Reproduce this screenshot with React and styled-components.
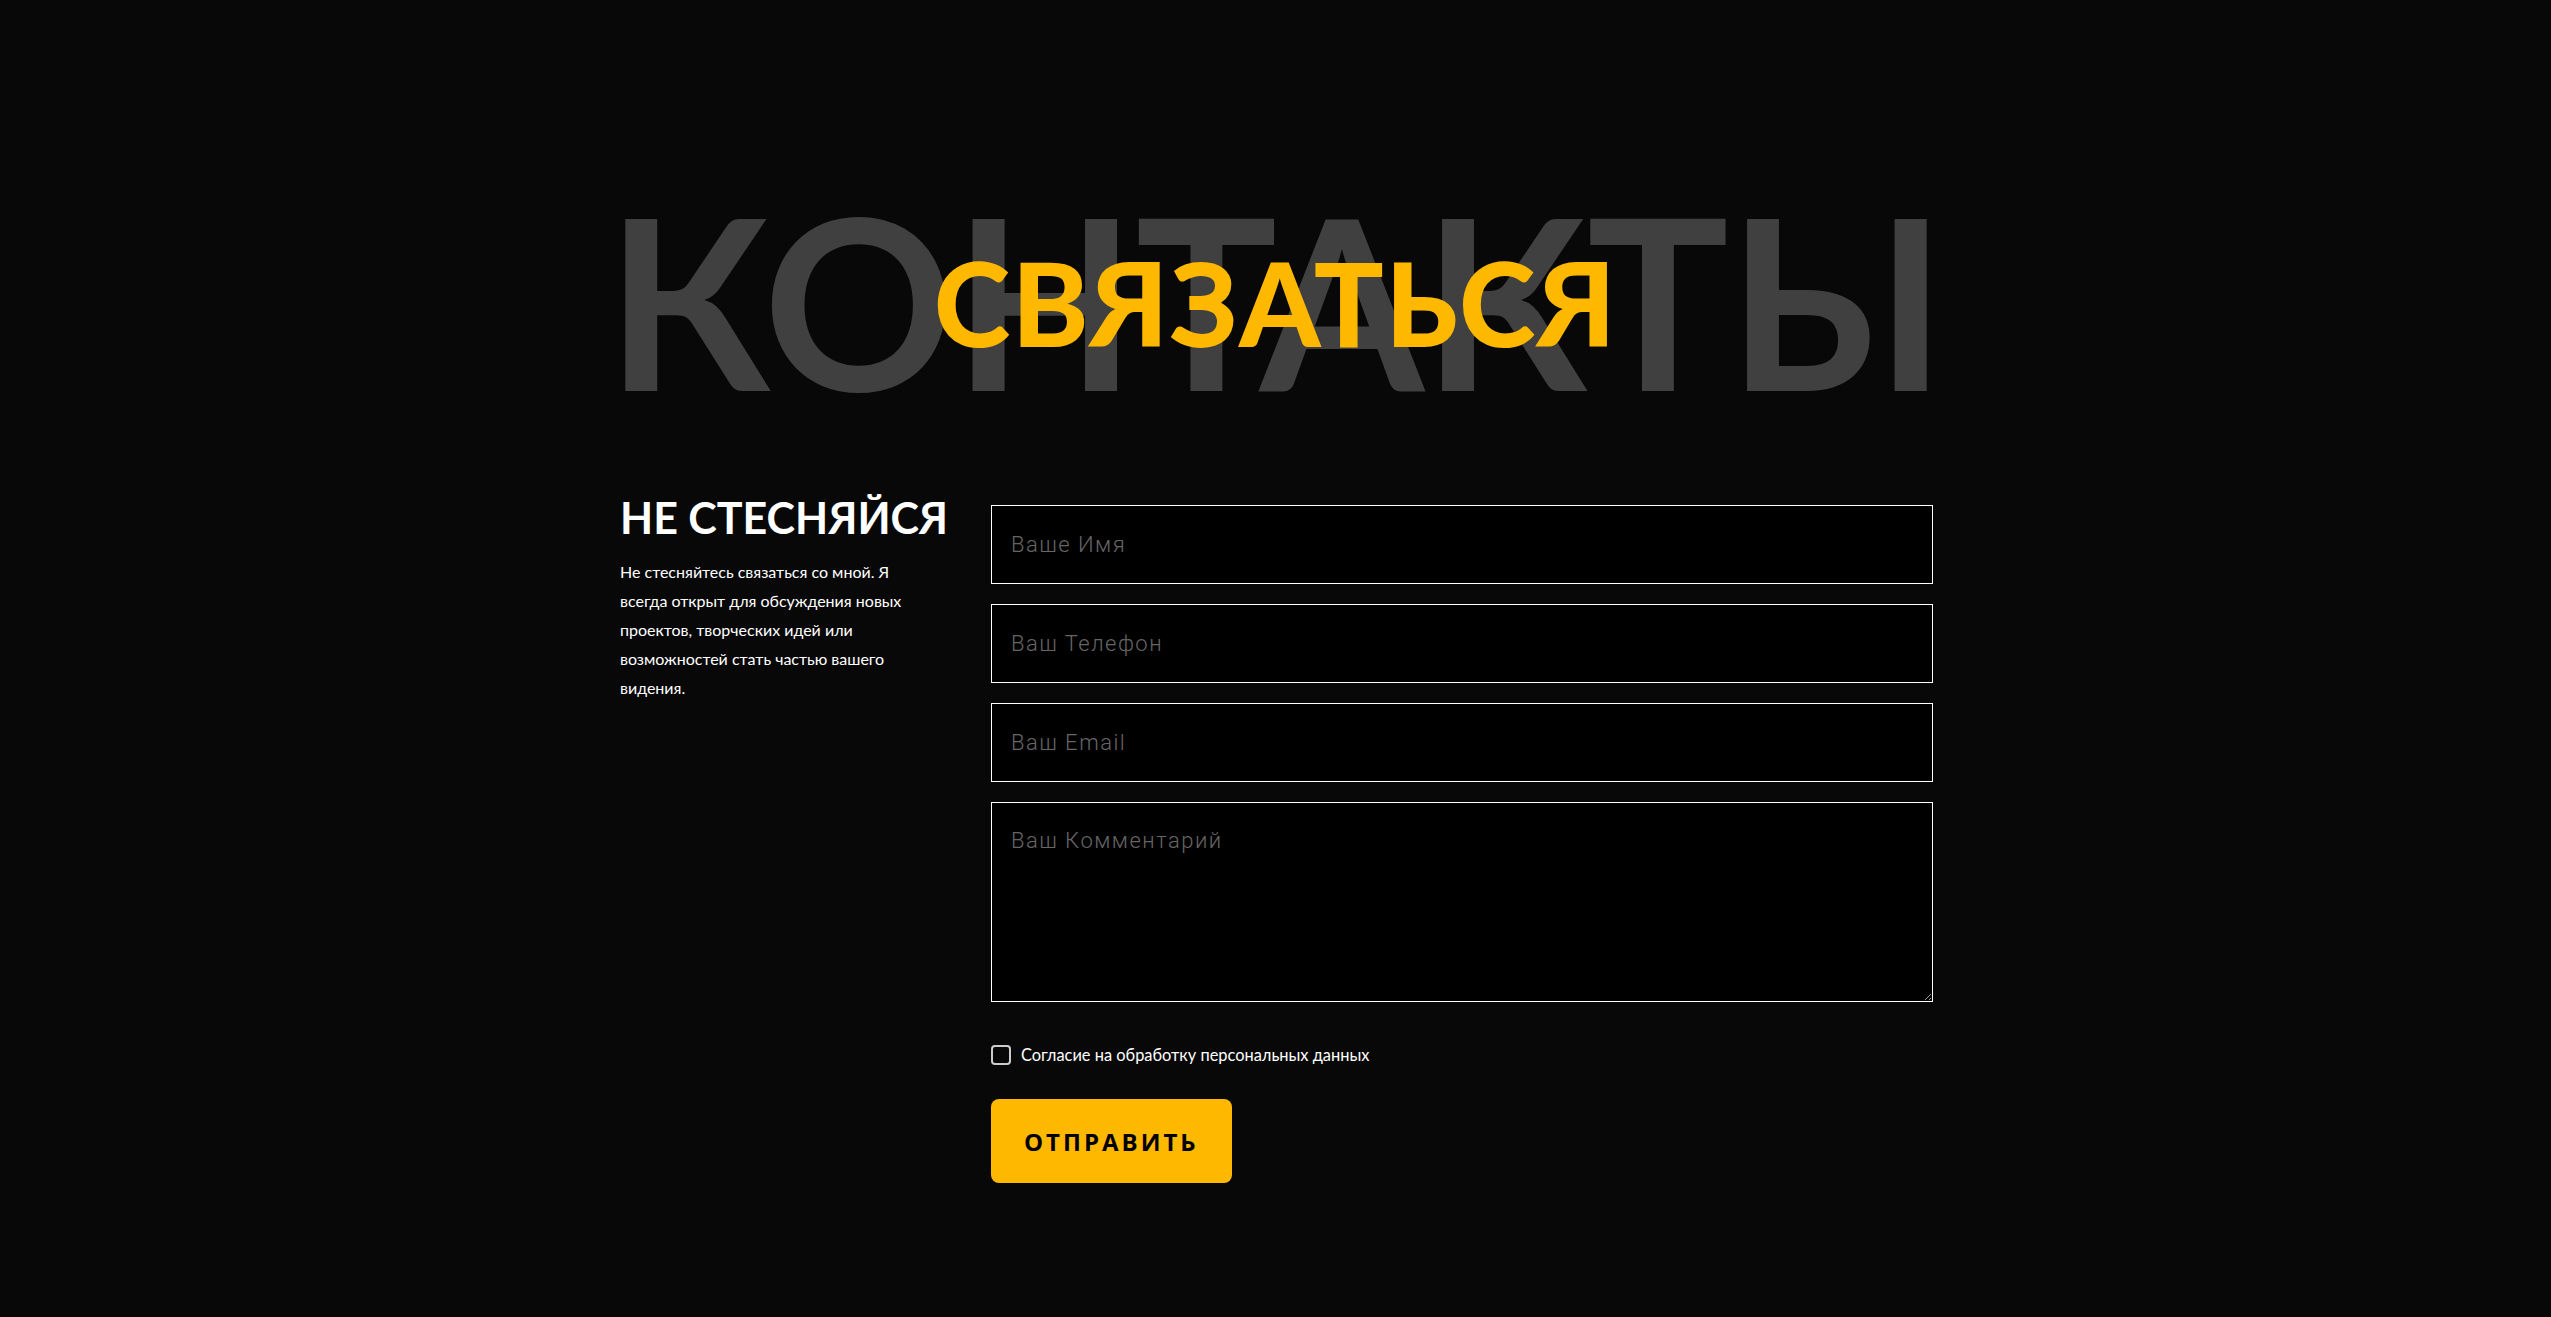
import React from "react";
import styled, { createGlobalStyle } from "styled-components";

const GlobalStyle = createGlobalStyle`
  * {
    box-sizing: border-box;
  }
  body {
    margin: 0;
    background: #080808;
    font-family: "Lato", "Liberation Sans", sans-serif;
  }
`;

const App = () => {
  return (
    <Page>
      <GlobalStyle />
      <Container>
        <TitleWrap>
          <BackTitle>КОНТАКТЫ</BackTitle>
          <FrontTitle>СВЯЗАТЬСЯ</FrontTitle>
        </TitleWrap>
        <Content>
          <Intro>
            <Heading>НЕ СТЕСНЯЙСЯ</Heading>
            <Text>
              Не стесняйтесь связаться со мной. Я всегда открыт для обсуждения
              новых проектов, творческих идей или возможностей стать частью
              вашего видения.
            </Text>
          </Intro>
          <Form onSubmit={(e) => e.preventDefault()}>
            <Fields>
              <Input type="text" placeholder="Ваше Имя" />
              <Input type="tel" placeholder="Ваш Телефон" />
              <Input type="email" placeholder="Ваш Email" />
              <TextArea placeholder="Ваш Комментарий" />
            </Fields>
            <Agree>
              <Checkbox type="checkbox" />
              <span>Согласие на обработку персональных данных</span>
            </Agree>
            <Button type="submit">ОТПРАВИТЬ</Button>
          </Form>
        </Content>
      </Container>
    </Page>
  );
};

export default App;

const Page = styled.section`
  min-height: 1317px;
  padding-top: 181px;
  background: #080808;
`;

const Container = styled.div`
  width: 1315px;
  margin: 0 auto;
`;

const TitleWrap = styled.div`
  position: relative;
  display: flex;
  justify-content: center;
`;

const BackTitle = styled.h2`
  margin: 0;
  font-family: "Lato", sans-serif;
  font-size: 237px;
  font-weight: 700;
  line-height: 1;
  letter-spacing: -1px;
  color: #404040;
  white-space: nowrap;
`;

const FrontTitle = styled.h1`
  position: absolute;
  inset: 0;
  display: flex;
  align-items: center;
  justify-content: center;
  margin: 0;
  padding-top: 6px;
  font-family: "Lato", sans-serif;
  font-size: 116px;
  font-weight: 900;
  line-height: 1;
  letter-spacing: 1.5px;
  color: #ffb800;
`;

const Content = styled.div`
  display: grid;
  grid-template-columns: 341px 1fr;
  column-gap: 32px;
  margin-top: 78px;
`;

const Intro = styled.div`
  display: flex;
  flex-direction: column;
  padding-left: 2px;
`;

const Heading = styled.h3`
  margin: 0;
  font-family: "Lato", sans-serif;
  font-size: 43px;
  font-weight: 700;
  line-height: 1;
  color: #fff;
  white-space: nowrap;
`;

const Text = styled.p`
  max-width: 300px;
  margin: 18px 0 0;
  font-size: 16px;
  line-height: 29px;
  color: #fff;
`;

const Form = styled.form`
  display: flex;
  flex-direction: column;
  align-items: flex-start;
  padding-top: 9px;
`;

const Fields = styled.div`
  display: flex;
  flex-direction: column;
  gap: 20px;
  width: 100%;
`;

const fieldStyles = `
  width: 100%;
  border: 1px solid #fff;
  background: #000;
  color: #fff;
  font-family: "Roboto", sans-serif;
  font-size: 22px;
  font-weight: 300;
  letter-spacing: 1.5px;
  outline: none;
  &::placeholder {
    color: #666;
  }
`;

const Input = styled.input`
  ${fieldStyles}
  height: 79px;
  padding: 0 19px;
`;

const TextArea = styled.textarea`
  ${fieldStyles}
  height: 200px;
  padding: 25px 19px;
  resize: vertical;
`;

const Agree = styled.label`
  display: flex;
  align-items: center;
  gap: 10px;
  margin-top: 41px;
  font-size: 16.4px;
  line-height: 24px;
  color: #fff;
  cursor: pointer;
`;

const Checkbox = styled.input`
  appearance: none;
  width: 20px;
  height: 20px;
  margin: 0;
  border: 2px solid #ccc;
  border-radius: 4px;
  background: transparent;
`;

const Button = styled.button`
  margin-top: 32px;
  height: 84px;
  padding: 0 33px;
  border: none;
  border-radius: 8px;
  background: #ffb800;
  color: #000;
  font-family: "Open Sans", sans-serif;
  font-size: 24px;
  font-weight: 700;
  letter-spacing: 3px;
  cursor: pointer;
`;
